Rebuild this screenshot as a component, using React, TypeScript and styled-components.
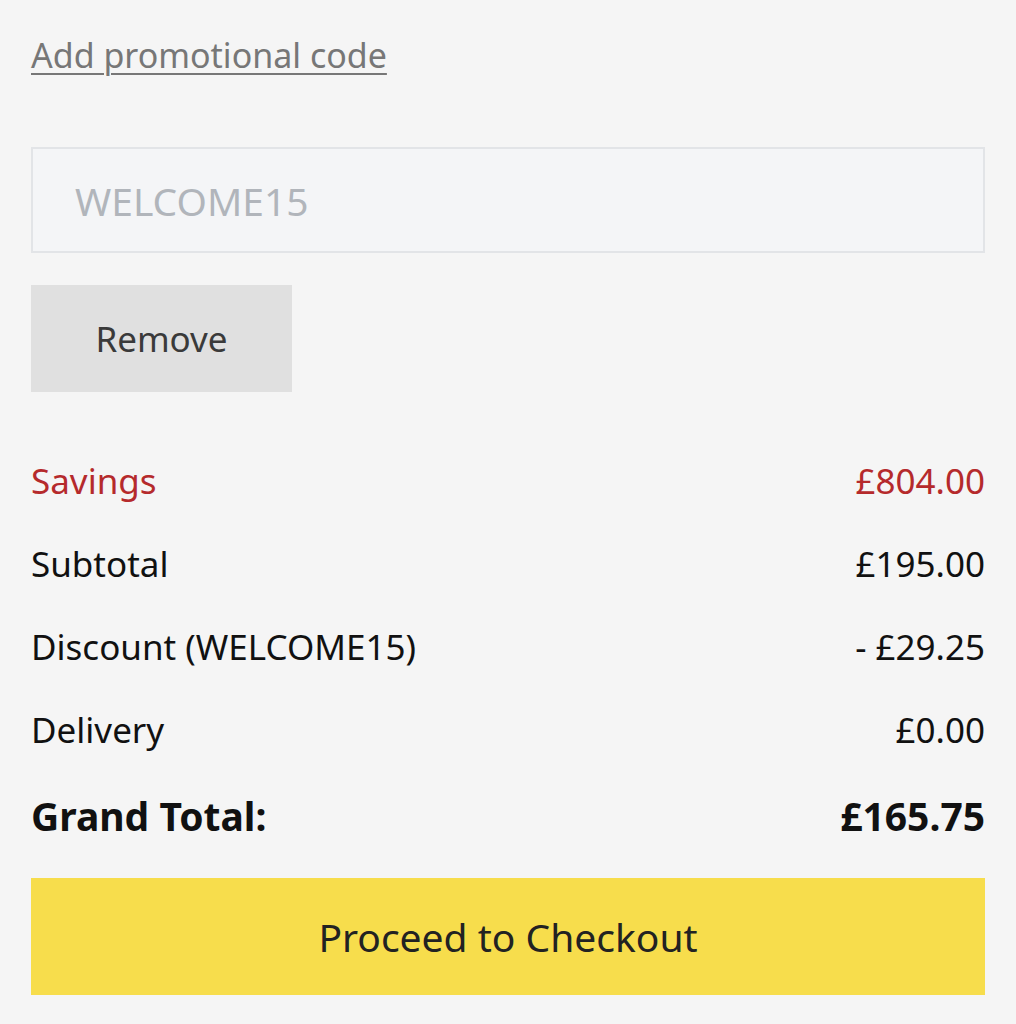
import React from "react";
import styled, { createGlobalStyle } from "styled-components";

const GlobalStyle = createGlobalStyle`
  html, body {
    margin: 0;
    padding: 0;
    background: #f5f5f5;
  }
  body {
    font-family: "Noto Sans", "Open Sans", sans-serif;
    color: #161616;
  }
`;

const Page = styled.div`
  padding: 32px 31px 0;
  display: flex;
  flex-direction: column;
`;

const PromoLink = styled.a`
  align-self: flex-start;
  font-size: 34px;
  line-height: 46px;
  color: #777777;
  text-decoration: underline;
  text-decoration-thickness: 2px;
  text-underline-offset: 5px;
  cursor: pointer;
`;

const CodeInput = styled.input`
  margin-top: 69px;
  height: 106px;
  box-sizing: border-box;
  border: 2px solid #e2e4e7;
  background: #f4f5f7;
  padding: 0 42px;
  font-family: inherit;
  font-size: 39px;
  color: #222;
  outline: none;

  &::placeholder {
    color: #b1b5bb;
  }
`;

const RemoveButton = styled.button`
  margin-top: 32px;
  align-self: flex-start;
  width: 261px;
  height: 107px;
  border: none;
  background: #e0e0e0;
  font-family: inherit;
  font-size: 35px;
  color: #3a3a3a;
  cursor: pointer;
`;

const Summary = styled.div`
  margin-top: 47px;
  display: flex;
  flex-direction: column;
`;

const Row = styled.div<{ $accent?: boolean; $total?: boolean }>`
  display: flex;
  justify-content: space-between;
  align-items: center;
  height: ${(p) => (p.$total ? "88px" : "83px")};
  font-size: ${(p) => (p.$total ? "39px" : "35px")};
  font-weight: ${(p) => (p.$total ? 700 : 400)};
  color: ${(p) => (p.$accent ? "#b52a2c" : "#111")};
`;

const CheckoutButton = styled.button`
  margin-top: 19px;
  height: 117px;
  border: none;
  background: #f7dd4c;
  font-family: inherit;
  font-size: 39px;
  color: #222;
  cursor: pointer;
`;

const rows = [
  { label: "Savings", value: "£804.00", accent: true },
  { label: "Subtotal", value: "£195.00" },
  { label: "Discount (WELCOME15)", value: "- £29.25" },
  { label: "Delivery", value: "£0.00" },
];

export default function App() {
  return (
    <>
      <GlobalStyle />
      <Page>
        <PromoLink>Add promotional code</PromoLink>
        <CodeInput placeholder="WELCOME15" />
        <RemoveButton>Remove</RemoveButton>
        <Summary>
          {rows.map((r) => (
            <Row key={r.label} $accent={r.accent}>
              <span>{r.label}</span>
              <span>{r.value}</span>
            </Row>
          ))}
          <Row $total>
            <span>Grand Total:</span>
            <span>£165.75</span>
          </Row>
        </Summary>
        <CheckoutButton>Proceed to Checkout</CheckoutButton>
      </Page>
    </>
  );
}
